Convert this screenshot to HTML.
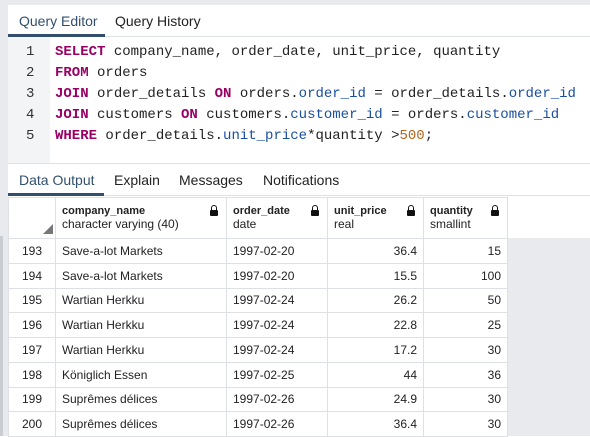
<!DOCTYPE html><html><head><style>
body{margin:0;width:590px;height:436px;overflow:hidden;background:#fff;font-family:"Liberation Sans",sans-serif;position:relative}
.l{position:absolute;left:0;top:0;width:8px;height:436px;background:#e8eaee}
.sb{position:absolute;left:0;top:236px;width:3px;height:200px;background:#c9ccd1}
.top{position:absolute;left:0;top:0;width:590px;height:5px;background:#e8eaee}
.tabs{position:absolute;left:8px;height:31px;width:582px;border-bottom:1px solid #dde0e4;font-size:14px}
.tabs span{position:absolute;top:8px;color:#222}
.tabs .a{color:#32506e}
.ul{position:absolute;bottom:-1px;height:3px;background:#32506e}
.ed{position:absolute;left:8px;top:37px;width:582px;height:126px;border-bottom:1px solid #dde0e4}
.gut{position:absolute;left:0;top:0;width:42px;height:126px;background:#f3f4f6}
.code{position:absolute;top:5px;font-family:"Liberation Mono",monospace;font-size:14px;line-height:21px;color:#222;white-space:pre}
.k{color:#990066;font-weight:bold}.p{color:#1a4fa0}.n{color:#b5651d}
table{position:absolute;left:8px;top:197px;border-collapse:collapse;font-size:12px;color:#222}
td{border:1px solid #dde0e4;height:23.75px;padding:0 6px;white-space:nowrap}
th{border:1px solid #dde0e4;height:40px;text-align:left;font-weight:normal;padding:0 6px;vertical-align:middle;position:relative}
th b{display:block;font-size:11px}
.r{text-align:right}.c{text-align:center}
.lk{position:absolute;right:8px;top:12px;width:8px;height:6px;background:#111;border-radius:1px}
.lk:before{content:"";position:absolute;left:1px;top:-5px;width:4px;height:5px;border:1px solid #111;border-bottom:0;border-radius:3px 3px 0 0}
.gr{position:absolute;left:508px;top:238px;width:82px;height:198px;background:#e8eaee}
</style></head><body>
<div class="top"></div>
<div class="tabs" style="top:5px"><span class="a" style="left:11px">Query Editor</span><span style="left:107px">Query History</span><div class="ul" style="left:0;width:97px"></div></div>
<div class="ed"><div class="gut"></div>
<div class="code" style="left:18px;color:#333">1
2
3
4
5</div>
<div class="code" style="left:47px"><span class="k">SELECT</span> company_name, order_date, unit_price, quantity
<span class="k">FROM</span> orders
<span class="k">JOIN</span> order_details <span class="k">ON</span> orders.<span class="p">order_id</span> = order_details.<span class="p">order_id</span>
<span class="k">JOIN</span> customers <span class="k">ON</span> customers.<span class="p">customer_id</span> = orders.<span class="p">customer_id</span>
<span class="k">WHERE</span> order_details.<span class="p">unit_price</span>*quantity &gt;<span class="n">500</span>;</div></div>
<div class="tabs" style="top:164px"><span class="a" style="left:11px">Data Output</span><span style="left:106px">Explain</span><span style="left:171px">Messages</span><span style="left:255px">Notifications</span><div class="ul" style="left:0;width:96px"></div></div>
<div class="l"></div><div class="sb"></div>
<div class="gr"></div>
<table>
<tr><th style="width:34px"><svg width="10" height="10" style="position:absolute;left:34px;bottom:4px"><path d="M10 0L10 10L0 10Z" fill="#777"/></svg></th><th style="width:158px"><b>company_name</b>character varying (40)<i class="lk"></i></th><th style="width:88px"><b>order_date</b>date<i class="lk"></i></th><th style="width:83px"><b>unit_price</b>real<i class="lk"></i></th><th style="width:71px"><b>quantity</b>smallint<i class="lk"></i></th></tr>
<tr><td class="c">193</td><td>Save-a-lot Markets</td><td>1997-02-20</td><td class="r">36.4</td><td class="r">15</td></tr>
<tr><td class="c">194</td><td>Save-a-lot Markets</td><td>1997-02-20</td><td class="r">15.5</td><td class="r">100</td></tr>
<tr><td class="c">195</td><td>Wartian Herkku</td><td>1997-02-24</td><td class="r">26.2</td><td class="r">50</td></tr>
<tr><td class="c">196</td><td>Wartian Herkku</td><td>1997-02-24</td><td class="r">22.8</td><td class="r">25</td></tr>
<tr><td class="c">197</td><td>Wartian Herkku</td><td>1997-02-24</td><td class="r">17.2</td><td class="r">30</td></tr>
<tr><td class="c">198</td><td>Königlich Essen</td><td>1997-02-25</td><td class="r">44</td><td class="r">36</td></tr>
<tr><td class="c">199</td><td>Suprêmes délices</td><td>1997-02-26</td><td class="r">24.9</td><td class="r">30</td></tr>
<tr><td class="c">200</td><td>Suprêmes délices</td><td>1997-02-26</td><td class="r">36.4</td><td class="r">30</td></tr>
</table>
</body></html>
